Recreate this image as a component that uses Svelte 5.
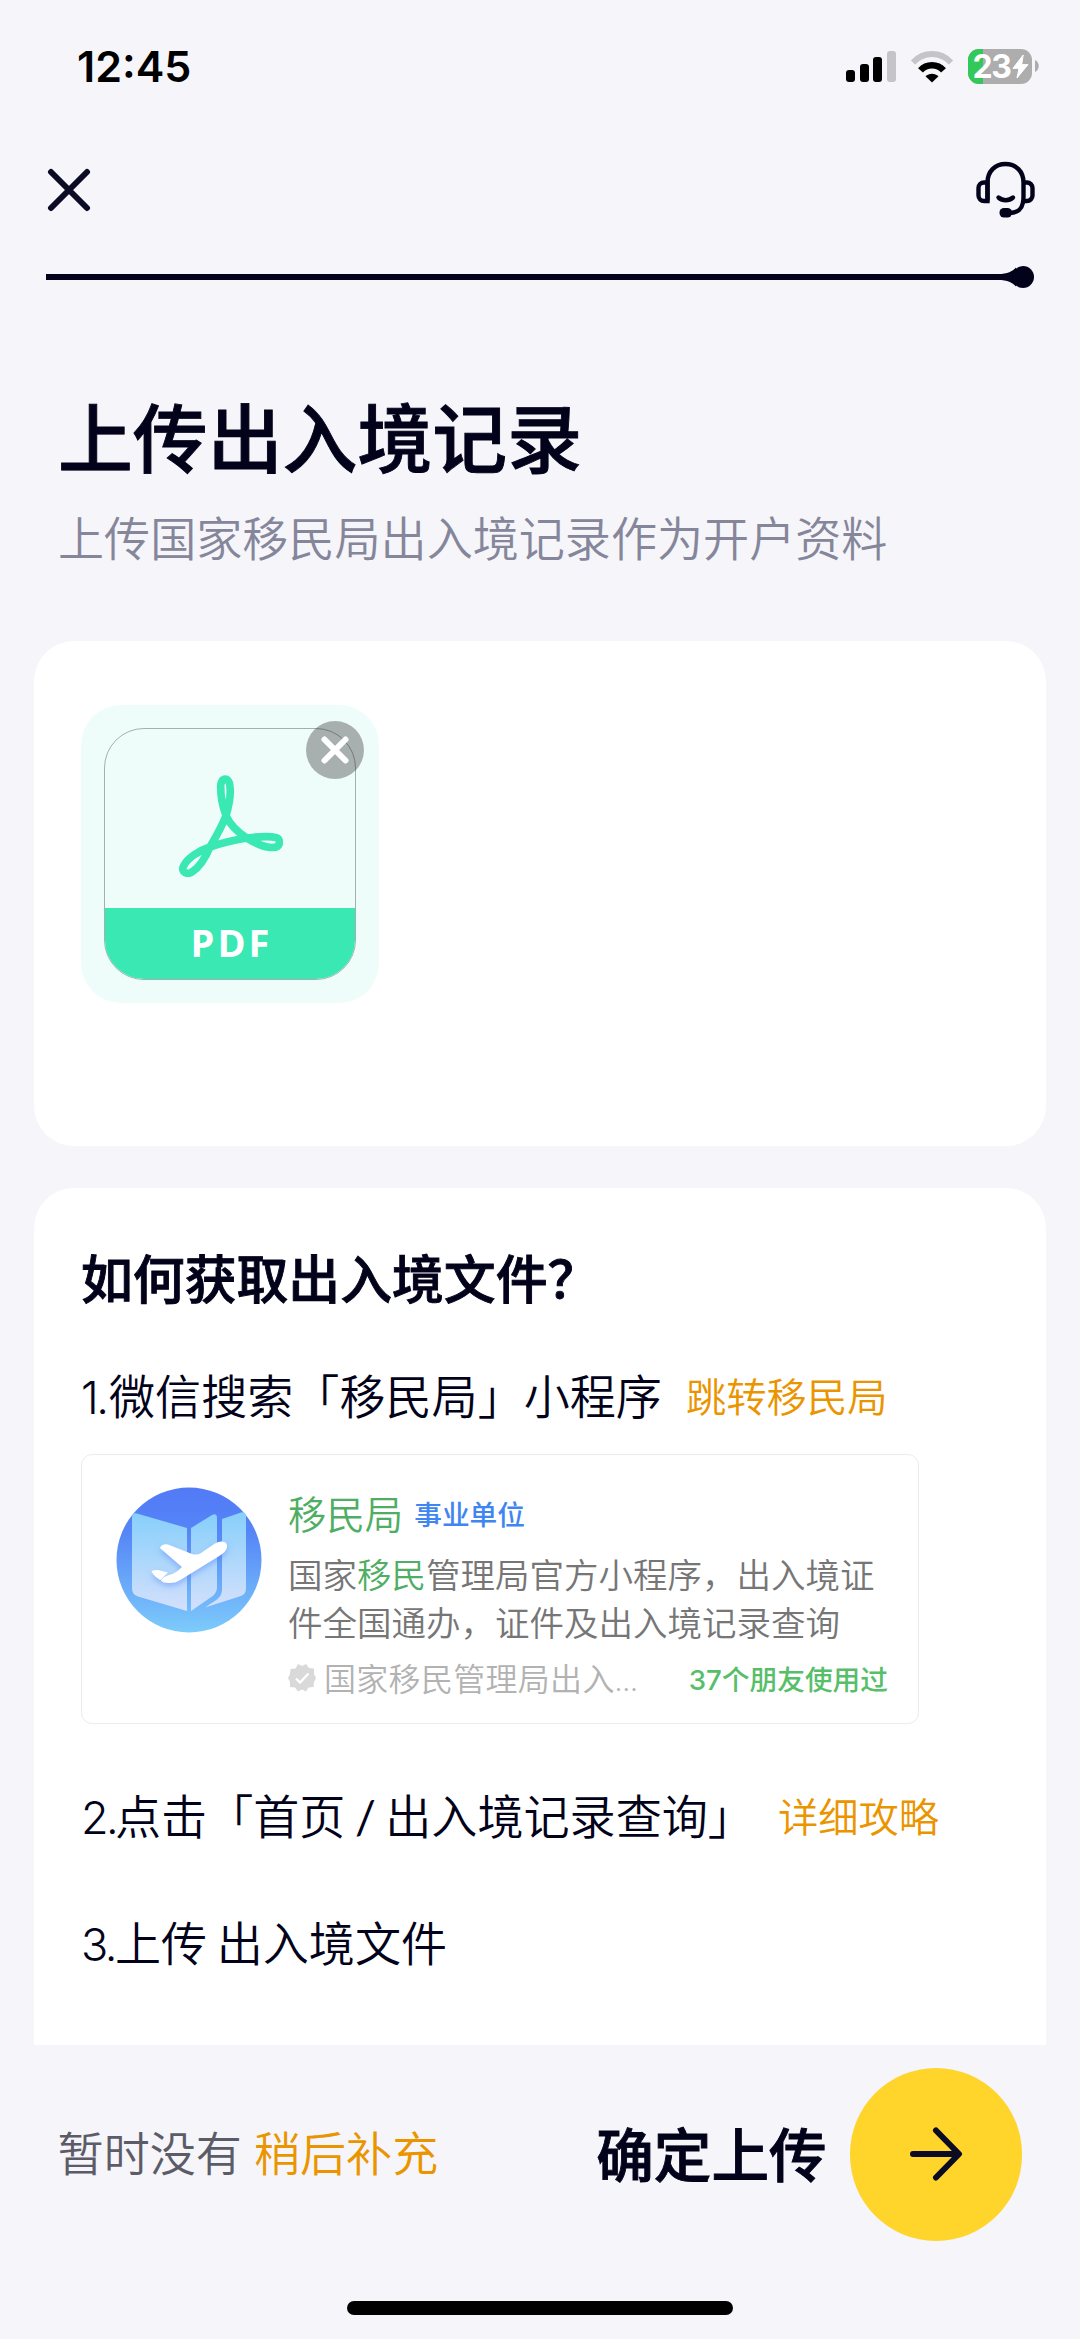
<script>
    const bars = [12, 18, 25, 31]

    const steps = [
        { no: 1, text: '微信搜索「移民局」小程序', link: '跳转移民局', hasPreview: true },
        { no: 2, text: '点击「首页 / 出入境记录查询」', link: '详细攻略' },
        { no: 3, text: '上传 出入境文件' }
    ]

    let battery = 23
    let files = $state(['PDF'])

    function removeFile(index) {
        files = files.filter((_, i) => i !== index)
    }
</script>

<div class="page">
    <header class="status-bar">
        <span class="time">12:45</span>
        <div class="status-icons">
            <div class="signal">
                {#each bars as height, i}
                    <i class:off={i === 3} style="height: {height}px"></i>
                {/each}
            </div>
            <svg class="wifi" width="44" height="33" viewBox="0 0 44 33">
                <path d="M3 12.5C13.5 1.2 30.5 1.2 41 12.5" stroke="#c4c4c9" stroke-width="6" fill="none" />
                <path d="M10.5 20.3C16.5 13.4 27.5 13.4 33.5 20.3" stroke="#000" stroke-width="6.5" fill="none" />
                <path d="M22 32.5l-6.5-6.3c3.4-3.4 9.6-3.4 13 0z" fill="#000" />
            </svg>
            <div class="battery">
                <div class="battery-body">
                    <div class="battery-level" style="width: {battery}%"></div>
                    <div class="battery-label">
                        <span>{battery}</span>
                        <svg width="17" height="25" viewBox="0 0 17 25">
                            <path
                                d="M11.2 1L1 14.3h6L5 24 16 10.6H9.7z"
                                fill="#fff"
                                stroke="#fff"
                                stroke-linejoin="round"
                            />
                        </svg>
                    </div>
                </div>
                <svg width="4" height="12" viewBox="0 0 4 12">
                    <path d="M0 0c5 2 5 10 0 12z" fill="#adadad" />
                </svg>
            </div>
        </div>
    </header>

    <nav class="nav-bar">
        <button class="icon-button" aria-label="关闭">
            <svg width="44" height="44" viewBox="0 0 44 44">
                <path d="M4 4l36 36M40 4L4 40" stroke="#0b0c24" stroke-width="6" stroke-linecap="round" />
            </svg>
        </button>
        <button class="icon-button" aria-label="客服">
            <svg width="60" height="58" viewBox="0 0 60 58" fill="none" stroke="#02031a" stroke-width="4.4">
                <path d="M12.5 39.5V21.5C12.5 10.5 20 3 30.5 3S48.5 10.5 48.5 21.5V36C48.5 47 44 52 34 52" />
                <path d="M12.5 21.5H9A5.5 5.5 0 0 0 3.5 27v7.5A5.5 5.5 0 0 0 9 40h3.5z" />
                <path d="M48.5 21.5H52A5.5 5.5 0 0 1 57.5 27v7.5A5.5 5.5 0 0 1 52 40h-4" />
                <path d="M23.5 36.5c4 3.6 10.5 3.6 14.5 0" stroke-linecap="round" />
                <rect x="24.5" y="47" width="12.5" height="9.5" rx="4.5" fill="#02031a" stroke="none" />
            </svg>
        </button>
    </nav>

    <svg class="progress" width="988" height="24" viewBox="0 0 988 24">
        <rect y="9" width="960" height="6" fill="#02021a" />
        <path d="M952 9C962 9 966 6.5 970 2.5V21.5C966 17.5 962 15 952 15z" fill="#02021a" />
        <circle cx="977" cy="12" r="11" fill="#02021a" />
    </svg>

    <section class="heading">
        <h1>上传出入境记录</h1>
        <p>上传国家移民局出入境记录作为开户资料</p>
    </section>

    <section class="card upload">
        {#each files as file, i}
            <div class="file">
                <div class="file-thumb">
                    <div class="file-icon">
                        <svg width="104" height="103" viewBox="0 0 312 309">
                            <path
                                d="M141 125C150 95 156 65 153 38C152 8 124 8 125 38C125 65 130 95 141 125C152 150 175 174 203 192C235 212 270 224 292 219C304 214 304 195 292 191C270 185 235 188 203 192C165 198 125 208 93 219C60 230 25 252 13 277C6 295 25 304 40 293C60 280 80 250 93 219C110 190 130 155 141 125z"
                                fill="none"
                                stroke="#39e8b3"
                                stroke-width="23"
                                stroke-linejoin="round"
                            />
                        </svg>
                    </div>
                    <div class="file-type">{file}</div>
                </div>
                <button class="remove" aria-label="删除" onclick={() => removeFile(i)}>
                    <svg width="28" height="28" viewBox="0 0 28 28">
                        <path d="M3.5 3.5l21 21M24.5 3.5l-21 21" stroke="#fff" stroke-width="6" stroke-linecap="round" />
                    </svg>
                </button>
            </div>
        {/each}
    </section>

    <section class="card guide">
        <h2>如何获取出入境文件？</h2>
        {#each steps as step}
            <div class="step">
                <span>
                    <span class="no" class:narrow={step.no === 1}>{step.no}.</span
                    >{#each step.text.split(/(\/)/) as part}<span class:slash={part === '/'}>{part}</span>{/each}
                </span>
                {#if step.link}
                    <button class="link">{step.link}</button>
                {/if}
            </div>
            {#if step.hasPreview}
                <div class="preview">
                    <svg class="logo" width="146" height="146" viewBox="0 0 146 146">
                        <defs>
                            <linearGradient id="sky" x1="0" y1="0" x2="0" y2="1">
                                <stop offset="0" stop-color="#527af6" />
                                <stop offset=".3" stop-color="#5585f7" />
                                <stop offset="1" stop-color="#7dcbfb" />
                            </linearGradient>
                            <linearGradient id="paper" x1="0" y1="0" x2="0" y2="1">
                                <stop offset="0" stop-color="#87cffb" />
                                <stop offset="1" stop-color="#d4e0fc" />
                            </linearGradient>
                            <filter id="glow" x="-20%" y="-20%" width="140%" height="150%">
                                <feDropShadow dx="0" dy="3" stdDeviation="3" flood-color="#5585f7" flood-opacity=".5" />
                            </filter>
                        </defs>
                        <circle cx="73" cy="73" r="72.5" fill="url(#sky)" />
                        <path d="M16 31q0-6 5-4.5L71 41V124L22 109.5q-6-2-6-8z" fill="url(#paper)" />
                        <path d="M75 41l21-13q5-2.5 5 3v69q0 6-5 9.5L75 124z" fill="url(#paper)" />
                        <path d="M106 32l19-6.5q5-1 5 4V102q0 5-5 7l-36 11.5 12-8q5-4 5-10z" fill="url(#paper)" />
                        <g fill="#fff" filter="url(#glow)">
                            <path
                                d="M44 61q2-4.5 8-3.5l24 9.5q5 1.5 9-1l14-9.5q6-3.5 10.5-1 3.500 4-1 9.500-3 2.500-7 5L65 92.500q-5 3.500-12 3.500-6 0-8-2.500 2-4 8-5.500 7-1.500 13-8z"
                            />
                            <path d="M35.500 84.500q1-2 6.500-1.500l10 2.500-7.500 7.500q-6-3-9-8.500z" />
                        </g>
                    </svg>
                    <div class="preview-info">
                        <div class="preview-title">
                            <span class="name">移民局</span>
                            <span class="tag">事业单位</span>
                        </div>
                        <p class="desc">国家<em>移民</em>管理局官方小程序，出入境证件全国通办，证件及出入境记录查询</p>
                        <div class="preview-meta">
                            <svg width="28" height="28" viewBox="0 0 28 28">
                                <path
                                    d="M14 2l4-2 3 4 5 .5V10l2 4-2 4-.5 5-5 .5-2.5 4-4-2-4 2-3-4-5-.5V18l-2-4 2-4 .5-5 5-.5L10 0z"
                                    fill="#d9d9d9"
                                />
                                <path d="M8 14.5l4 4 8.5-9" fill="none" stroke="#fff" stroke-width="2.4" />
                            </svg>
                            <span class="org">国家移民管理局出入...</span>
                            <span class="friends">37个朋友使用过</span>
                        </div>
                    </div>
                </div>
            {/if}
        {/each}
    </section>

    <footer>
        <p class="later">暂时没有 <button class="link">稍后补充</button></p>
        <div class="submit">
            <span>确定上传</span>
            <button class="go" aria-label="确定上传">
                <svg width="54" height="56" viewBox="0 0 54 56" fill="none">
                    <path
                        d="M4 28h45.5M27 4.5L50 28 27 51.5"
                        stroke="#0b0c24"
                        stroke-width="6"
                        stroke-linecap="round"
                        stroke-linejoin="round"
                    />
                </svg>
            </button>
        </div>
    </footer>
    <div class="home-indicator"></div>
</div>

<style>
    :global(body) {
        margin: 0;
        background: #f5f5fa;
    }

    .page {
        display: flex;
        flex-direction: column;
        box-sizing: border-box;
        width: 1080px;
        height: 2339px;
        overflow: hidden;
        background: #f5f5fa;
        color: #02021a;
        font-family: Lato, 'Noto Sans CJK SC', sans-serif;
        font-weight: 350;
    }

    h1,
    h2,
    p {
        margin: 0;
    }

    /* between medium and bold */
    h1,
    h2,
    .submit {
        font-weight: 500;
        -webkit-text-stroke: 0.9px currentColor;
    }

    svg {
        display: block;
        flex-shrink: 0;
    }

    button {
        border: none;
        padding: 0;
        background: none;
        font: inherit;
        cursor: pointer;
    }

    .status-bar {
        display: flex;
        align-items: center;
        justify-content: space-between;
        height: 132px;
        padding: 0 41px 0 77px;
        font-family: Inter, sans-serif;
        color: #000;
    }

    .time {
        font-size: 43px;
        font-weight: 600;
    }

    .status-icons {
        display: flex;
        align-items: center;
        gap: 14px;
    }

    .signal {
        display: flex;
        align-items: flex-end;
        gap: 4.6px;
        height: 31px;
    }

    .signal i {
        width: 9px;
        border-radius: 3px;
        background: #000;
    }

    .signal i.off {
        background: #c4c4c9;
    }

    .battery {
        display: flex;
        align-items: center;
        gap: 3px;
    }

    .battery-body {
        position: relative;
        width: 64px;
        height: 35px;
        border-radius: 11px;
        background: #adadad;
    }

    .battery-level {
        height: 100%;
        border-radius: 11px 0 0 11px;
        background: #34c759;
    }

    .battery-label {
        position: absolute;
        inset: 0;
        display: flex;
        align-items: center;
        justify-content: center;
        gap: 2px;
        padding-left: 2px;
        color: #fff;
        font-size: 32px;
        font-weight: 700;
        line-height: 35px;
        letter-spacing: -1.5px;
    }

    .nav-bar {
        display: flex;
        align-items: center;
        justify-content: space-between;
        height: 116px;
        padding: 0 45px 0 47px;
    }

    .progress {
        margin: 17px 0 0 46px;
    }

    .heading {
        height: 244px;
        padding: 111px 58px 0;
        box-sizing: border-box;
        margin-bottom: 108px;
    }

    h1 {
        font-size: 74.88px;
        line-height: 76px;
    }

    .heading p {
        margin-top: 36px;
        font-size: 46.08px;
        line-height: 54px;
        color: #85869a;
    }

    .card {
        box-sizing: border-box;
        margin: 0 34px;
        background: #fff;
        border-radius: 40px;
    }

    .upload {
        flex-shrink: 0;
        height: 505px;
        padding: 64px 47px;
    }

    .file {
        position: relative;
        box-sizing: border-box;
        width: 298px;
        height: 298px;
        padding: 23px;
        border-radius: 40px;
        background: #effdfa;
    }

    .file-thumb {
        display: flex;
        flex-direction: column;
        box-sizing: border-box;
        height: 252px;
        border: 1px solid #a3b0ad;
        border-radius: 40px;
        overflow: hidden;
    }

    .file-icon {
        display: flex;
        align-items: center;
        justify-content: center;
        height: 179px;
        padding: 14px 0 0 2px;
        box-sizing: border-box;
    }

    .file-type {
        flex: 1;
        padding-left: 3px;
        background: #39e8b3;
        color: #fff;
        font: 700 38px/69px 'Open Sans', sans-serif;
        letter-spacing: 3px;
        text-align: center;
    }

    .remove {
        position: absolute;
        top: 16px;
        right: 15px;
        display: flex;
        align-items: center;
        justify-content: center;
        width: 58px;
        height: 58px;
        border-radius: 50%;
        background: rgba(0, 0, 0, 0.3);
    }

    .guide {
        height: 857px;
        margin-top: 42px;
        padding: 62px 47px 0;
        border-radius: 40px 40px 0 0;
    }

    h2 {
        font-size: 51.84px;
        line-height: 58px;
    }

    .step {
        display: flex;
        align-items: center;
        gap: 24px;
        height: 60px;
        margin-top: 67px;
        font-size: 46.08px;
        line-height: 60px;
        white-space: nowrap;
        word-spacing: -3px;
    }

    h2 + .step {
        margin-top: 59px;
    }

    .preview + .step {
        margin-top: 63px;
    }

    .no {
        display: inline-block;
        width: 34px;
        font-family: Inter, sans-serif;
        font-size: 45px;
        letter-spacing: -2.5px;
    }

    .no.narrow {
        width: 28px;
    }

    .slash {
        font-weight: 400;
    }

    .link {
        color: #ea9500;
    }

    .step .link {
        font-size: 40.32px;
        line-height: 60px;
    }

    .preview {
        display: flex;
        gap: 26px;
        box-sizing: border-box;
        width: 838px;
        height: 270px;
        margin-top: 27px;
        padding: 32px 0 0 34px;
        border: 1px solid #ececec;
        border-radius: 11px;
    }

    .preview-info {
        width: 600px;
    }

    .preview-title {
        display: flex;
        align-items: center;
        gap: 11px;
        height: 52px;
    }

    .name {
        padding-bottom: 2px;
        font-size: 38.4px;
        color: #4fae63;
    }

    .tag {
        font-size: 27.7px;
        font-weight: 500;
        color: #3f86f0;
    }

    .desc {
        margin-top: 12px;
        font-size: 34.5px;
        line-height: 48px;
        color: #767676;
    }

    .desc em {
        font-style: normal;
        color: #4fae63;
    }

    .preview-meta {
        display: flex;
        align-items: center;
        height: 40px;
        margin-top: 11px;
    }

    .org {
        margin-left: 8px;
        padding-bottom: 3px;
        font-size: 32px;
        letter-spacing: 0.3px;
        color: #b2b2b2;
    }

    .friends {
        margin-left: auto;
        font-family: Inter, 'Noto Sans CJK SC', sans-serif;
        font-size: 27.7px;
        font-weight: 500;
        color: #57be6a;
    }

    footer {
        display: flex;
        align-items: center;
        justify-content: space-between;
        height: 219px;
        padding: 0 57.6px;
        font-size: 46.08px;
    }

    .later {
        padding-bottom: 7px;
        color: #5c5c68;
        word-spacing: -0.5px;
    }

    .submit {
        display: flex;
        align-items: center;
        gap: 23px;
        font-size: 57.6px;
    }

    .submit span {
        padding-bottom: 5px;
    }

    .go {
        display: flex;
        align-items: center;
        justify-content: center;
        width: 172.8px;
        height: 172.8px;
        border-radius: 50%;
        background: #ffd42b;
    }

    .home-indicator {
        align-self: center;
        width: 386px;
        height: 14px;
        margin-top: 37px;
        border-radius: 7px;
        background: #000;
    }
</style>
